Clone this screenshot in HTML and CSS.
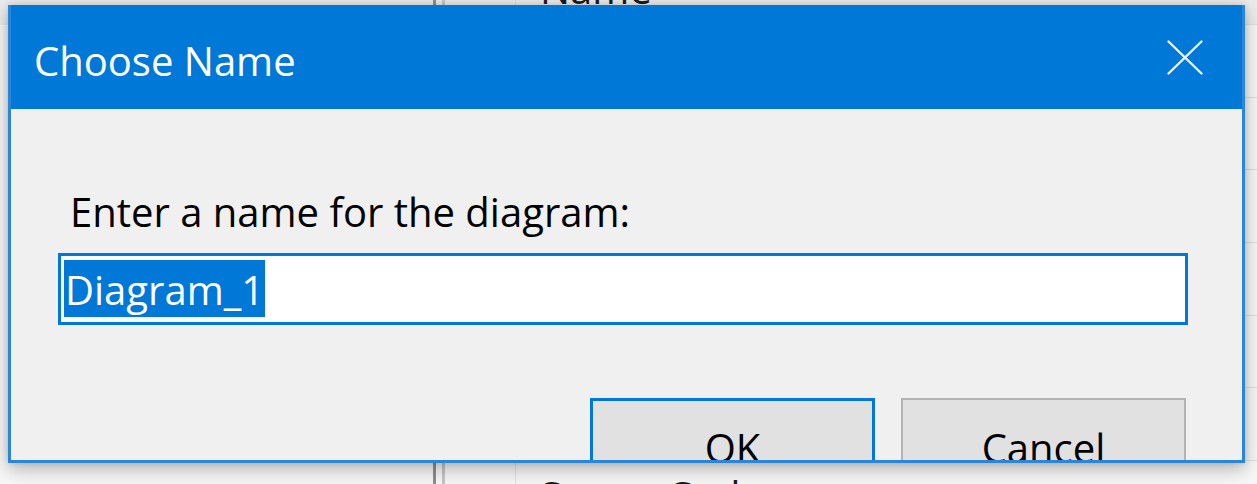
FILE: index.html
```html
<!DOCTYPE html>
<html lang="en">
<head>
<meta charset="utf-8">
<title>Choose Name</title>
<link rel="stylesheet" href="styles.css">
</head>
<body>
<div class="table">
  <div class="row head"><div class="c1"></div><div class="c2"></div><div class="c3"></div><div class="c4">Name</div></div>
  <div class="row"><div class="c1"></div><div class="c2"></div><div class="c3"></div><div class="c4"></div></div>
  <div class="row"><div class="c1"></div><div class="c2"></div><div class="c3"></div><div class="c4"></div></div>
  <div class="row"><div class="c1"></div><div class="c2"></div><div class="c3"></div><div class="c4"></div></div>
  <div class="row"><div class="c1"></div><div class="c2"></div><div class="c3"></div><div class="c4"></div></div>
  <div class="row"><div class="c1"></div><div class="c2"></div><div class="c3"></div><div class="c4"></div></div>
  <div class="row"><div class="c1"></div><div class="c2"></div><div class="c3"></div><div class="c4"></div></div>
  <div class="row last"><div class="c1"></div><div class="c2"></div><div class="c3"></div><div class="c4">Status Code</div></div>
</div>

<div class="dialog">
  <div class="titlebar">
    <div class="title">Choose Name</div>
    <svg class="close" viewBox="0 0 36 35" width="36" height="35" aria-hidden="true">
      <path d="M1.5 1.5 L34.5 33.5 M34.5 1.5 L1.5 33.5" stroke="#ffffff" stroke-width="2.4" stroke-linecap="round" fill="none" opacity="0.92"/>
    </svg>
  </div>
  <div class="body">
    <p class="label">Enter a name for the diagram:</p>
    <div class="input"><span class="sel">Diagram_1</span></div>
    <div class="actions">
      <div class="btn primary">OK</div>
      <div class="btn">Cancel</div>
    </div>
  </div>
</div>
</body>
</html>
```

FILE: styles.css
```css
html, body {
  margin: 0;
  padding: 0;
}

body {
  width: 1257px;
  height: 484px;
  overflow: hidden;
  position: relative;
  background: #f6f6f6;
  font-family: "Open Sans", "Noto Sans", sans-serif;
}

/* background application table */
.table {
  margin-top: -47.7px;
}

.row {
  display: grid;
  grid-template-columns: 433px 12px 71px 1fr;
  height: 72.67px;
  background: #f7f7f7;
}

.row.head {
  background: #ebebeb;
}

.c2 {
  border-left: 3px solid #8e8e8e;
  border-right: 3px solid #c6c6c6;
}

.c3 {
  border-right: 1px solid #e0e0e0;
  border-bottom: 1px solid #dedede;
}

.c4 {
  padding-left: 24px;
  font-size: 40px;
  line-height: 48px;
  color: #1a1a1a;
  white-space: nowrap;
  border-bottom: 1px solid #dedede;
}

.row.head .c4 {
  padding-top: 13px;
}

.row.last .c4 {
  padding-top: 11px;
}

/* dialog */
.dialog {
  position: absolute;
  left: 8px;
  top: 5px;
  width: 1237px;
  height: 458px;
  box-sizing: border-box;
  border: 3px solid #2a86da;
  border-top: 0;
  background: #f0f0f0;
  overflow: hidden;
  box-shadow: 0 6px 18px rgba(0, 0, 0, 0.28), 0 0 6px rgba(0, 0, 0, 0.12);
  display: flex;
  flex-direction: column;
}

.titlebar {
  flex: none;
  height: 104px;
  box-sizing: border-box;
  background: #0078d7;
  color: #ffffff;
  display: flex;
  justify-content: space-between;
  align-items: flex-start;
  padding: 32px 39px 0 23px;
}

.title {
  font-size: 40px;
  line-height: 48px;
}

.close {
  display: block;
  margin-top: 3px;
}

.body {
  flex: 1;
  padding: 79px 54px 0 47px;
}

.label {
  margin: 0;
  padding-left: 12px;
  font-size: 40px;
  line-height: 48px;
  color: #000000;
}

.input {
  margin-top: 17px;
  height: 72px;
  box-sizing: border-box;
  border: 3px solid #0078d7;
  background: #ffffff;
  padding: 4px 3px;
}

.sel {
  display: inline-block;
  height: 57px;
  box-sizing: border-box;
  padding: 3px 1px 0;
  background: #0078d7;
  color: #ffffff;
  font-size: 40px;
  line-height: 54px;
  vertical-align: top;
}

.actions {
  display: flex;
  justify-content: flex-end;
  gap: 26px;
  margin-top: 73px;
  padding-right: 2px;
}

.btn {
  width: 285px;
  height: 80px;
  box-sizing: border-box;
  background: #e1e1e1;
  border: 2px solid #b3b3b3;
  padding-top: 24px;
  text-align: center;
  font-size: 40px;
  line-height: 48px;
  color: #000000;
}

.btn.primary {
  border: 3px solid #0078d7;
  padding-top: 23px;
}
```
